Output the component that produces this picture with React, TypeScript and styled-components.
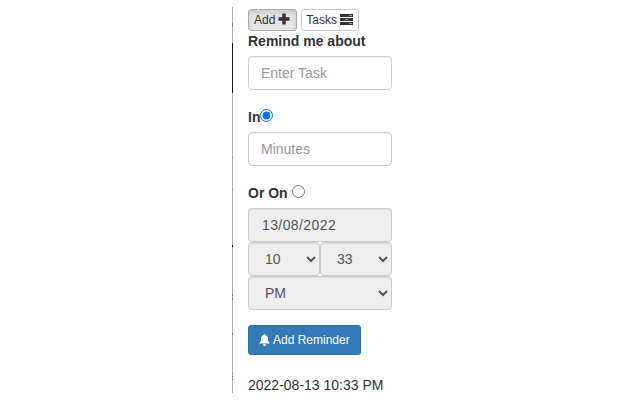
import React from "react";
import styled, { createGlobalStyle } from "styled-components";

const GlobalStyle = createGlobalStyle`
  html, body {
    margin: 0;
    padding: 0;
    background: #fff;
    width: 640px;
    height: 400px;
    overflow: hidden;
    font-family: "Liberation Sans", Arial, sans-serif;
    font-size: 14px;
    color: #333;
  }
  * {
    box-sizing: border-box;
  }
`;

type Tone = "base" | "mid" | "dark";

const toneColors: Record<Tone, string> = {
  base: "#b0b0b0",
  mid: "#777",
  dark: "#1a1a1a",
};

// the divider on the left changes shade along its height
const railSegments: [number, Tone][] = [
  [16, "base"], [4, "mid"], [16, "base"], [50, "dark"], [64, "base"],
  [1, "mid"], [31, "base"], [1, "mid"], [55, "base"], [2, "dark"],
  [47, "base"], [2, "mid"], [2, "base"], [2, "mid"], [33, "base"],
  [2, "mid"], [38, "base"], [1, "mid"], [2, "base"], [1, "mid"],
  [2, "base"], [1, "mid"], [13, "base"],
];

const Page = styled.div`
  display: flex;
  width: 640px;
  height: 400px;
  padding: 7px 0 0 232px;
`;

const Rail = styled.div`
  display: flex;
  flex-direction: column;
  width: 1px;
  height: 386px;
`;

const RailSegment = styled.span<{ $size: number; $tone: Tone }>`
  display: block;
  height: ${(p) => p.$size}px;
  background: ${(p) => toneColors[p.$tone]};
`;

const Panel = styled.div`
  width: 159px;
  padding: 2px 0 0 15px;
`;

const Toolbar = styled.div`
  display: flex;
  gap: 4px;
  height: 22px;
`;

const TabButton = styled.button<{ $active?: boolean }>`
  display: flex;
  align-items: center;
  gap: 3px;
  height: 22px;
  padding: 0 ${(p) => (p.$active ? "6px 0 5px" : "5px 0 4px")};
  font: 12px/1.5 "Liberation Sans", Arial, sans-serif;
  color: #333;
  border: 1px solid ${(p) => (p.$active ? "#adadad" : "#ccc")};
  border-radius: 3px;
  background: ${(p) => (p.$active ? "#e6e6e6" : "#fff")};
  box-shadow: ${(p) => (p.$active ? "inset 0 3px 5px rgba(0,0,0,.125)" : "none")};
`;

const TabIcon = styled.svg`
  margin-bottom: 2px;
  fill: #333;
`;

const Label = styled.label`
  display: block;
  font-weight: 700;
  font-size: 14px;
  line-height: 20px;
  color: #333;
`;

const TopLabel = styled(Label)`
  margin-bottom: 5px;
`;

const RadioRow = styled.div`
  display: flex;
  align-items: center;
  margin-top: 17px;
  margin-bottom: 5px;
  height: 20px;
`;

const Radio = styled.input`
  width: 13px;
  height: 13px;
  margin: 0 0 4px;
`;

const Field = styled.input<{ $spaced?: boolean }>`
  display: block;
  width: 144px;
  height: 34px;
  padding: 6px ${(p) => (p.$spaced ? 13 : 12)}px;
  font: 14px/20px "Liberation Sans", Arial, sans-serif;
  letter-spacing: ${(p) => (p.$spaced ? "0.4px" : "0")};
  color: #555;
  border: 1px solid #ccc;
  border-radius: 4px;
  background: #fff;
  box-shadow: inset 0 1px 1px rgba(0, 0, 0, 0.075);
  &::placeholder {
    color: #999;
    opacity: 1;
  }
  &:disabled {
    background: #eee;
    opacity: 1;
  }
`;

const TimeRow = styled.div`
  display: flex;
  width: 144px;
`;

const Select = styled.select`
  display: block;
  width: 100%;
  height: 34px;
  padding: 6px 12px;
  font: 14px/20px "Liberation Sans", Arial, sans-serif;
  color: #555;
  border: 1px solid #ccc;
  border-radius: 4px;
  background: #eee;
  opacity: 1;
  box-shadow: inset 0 1px 1px rgba(0, 0, 0, 0.075);
`;

const AddButton = styled.button`
  display: flex;
  align-items: center;
  gap: 3px;
  height: 30px;
  margin-top: 15px;
  padding: 0 10px;
  font: 12px/1.5 "Liberation Sans", Arial, sans-serif;
  color: #fff;
  background: #337ab7;
  border: 1px solid #2e6da4;
  border-radius: 3px;
`;

const Stamp = styled.div`
  margin-top: 20px;
  font-size: 14px;
  line-height: 20px;
  color: #333;
`;

const PlusIcon = () => (
  <TabIcon width="12" height="12" viewBox="0 0 12 12">
    <path d="M4.250 0.500h3.500v3.750h3.750v3.500H7.750v3.750h-3.500V7.750H0.500v-3.500h3.750z" />
  </TabIcon>
);

const TasksIcon = () => (
  <TabIcon width="13" height="11" viewBox="0 0 13 11">
    <path d="M0 0h13v3H0zM0 4h13v3H0zM0 8h13v3H0z" />
    <path d="M9 1h3v1H9zM5 5h3v1H5zM9 9h3v1H9z" fill="#999" />
  </TabIcon>
);

const BellIcon = () => (
  <svg width="11" height="12" viewBox="0 0 11 12" fill="#fff">
    <path d="M5.500 0C6 0 6.300.4 6.200 1 8 1.300 9 2.800 9 4.500c0 2.500.6 3.600 2 5H0c1.400-1.400 2-2.500 2-5C2 2.800 3 1.300 4.800 1 4.700.4 5 0 5.500 0zM4 10.300h3C7 11.300 6.300 12 5.500 12S4 11.300 4 10.300z" />
  </svg>
);

const App = () => {
  return (
    <Page>
      <GlobalStyle />
      <Rail>
        {railSegments.map(([size, tone], i) => (
          <RailSegment key={i} $size={size} $tone={tone} />
        ))}
      </Rail>
      <Panel>
        <Toolbar>
          <TabButton $active>
            Add <PlusIcon />
          </TabButton>
          <TabButton>
            Tasks <TasksIcon />
          </TabButton>
        </Toolbar>
        <TopLabel>Remind me about</TopLabel>
        <Field type="text" placeholder="Enter Task" />
        <RadioRow>
          <Label>In</Label>
          <Radio type="radio" name="when" defaultChecked />
        </RadioRow>
        <Field type="text" placeholder="Minutes" />
        <RadioRow>
          <Label>Or On&nbsp;</Label>
          <Radio type="radio" name="when" />
        </RadioRow>
        <Field type="text" defaultValue="13/08/2022" disabled $spaced />
        <TimeRow>
          <Select disabled defaultValue="10">
            <option>10</option>
          </Select>
          <Select disabled defaultValue="33">
            <option>33</option>
          </Select>
        </TimeRow>
        <Select disabled defaultValue="PM">
          <option>PM</option>
        </Select>
        <AddButton>
          <BellIcon /> Add Reminder
        </AddButton>
        <Stamp>2022-08-13 10:33 PM</Stamp>
      </Panel>
    </Page>
  );
};

export default App;
